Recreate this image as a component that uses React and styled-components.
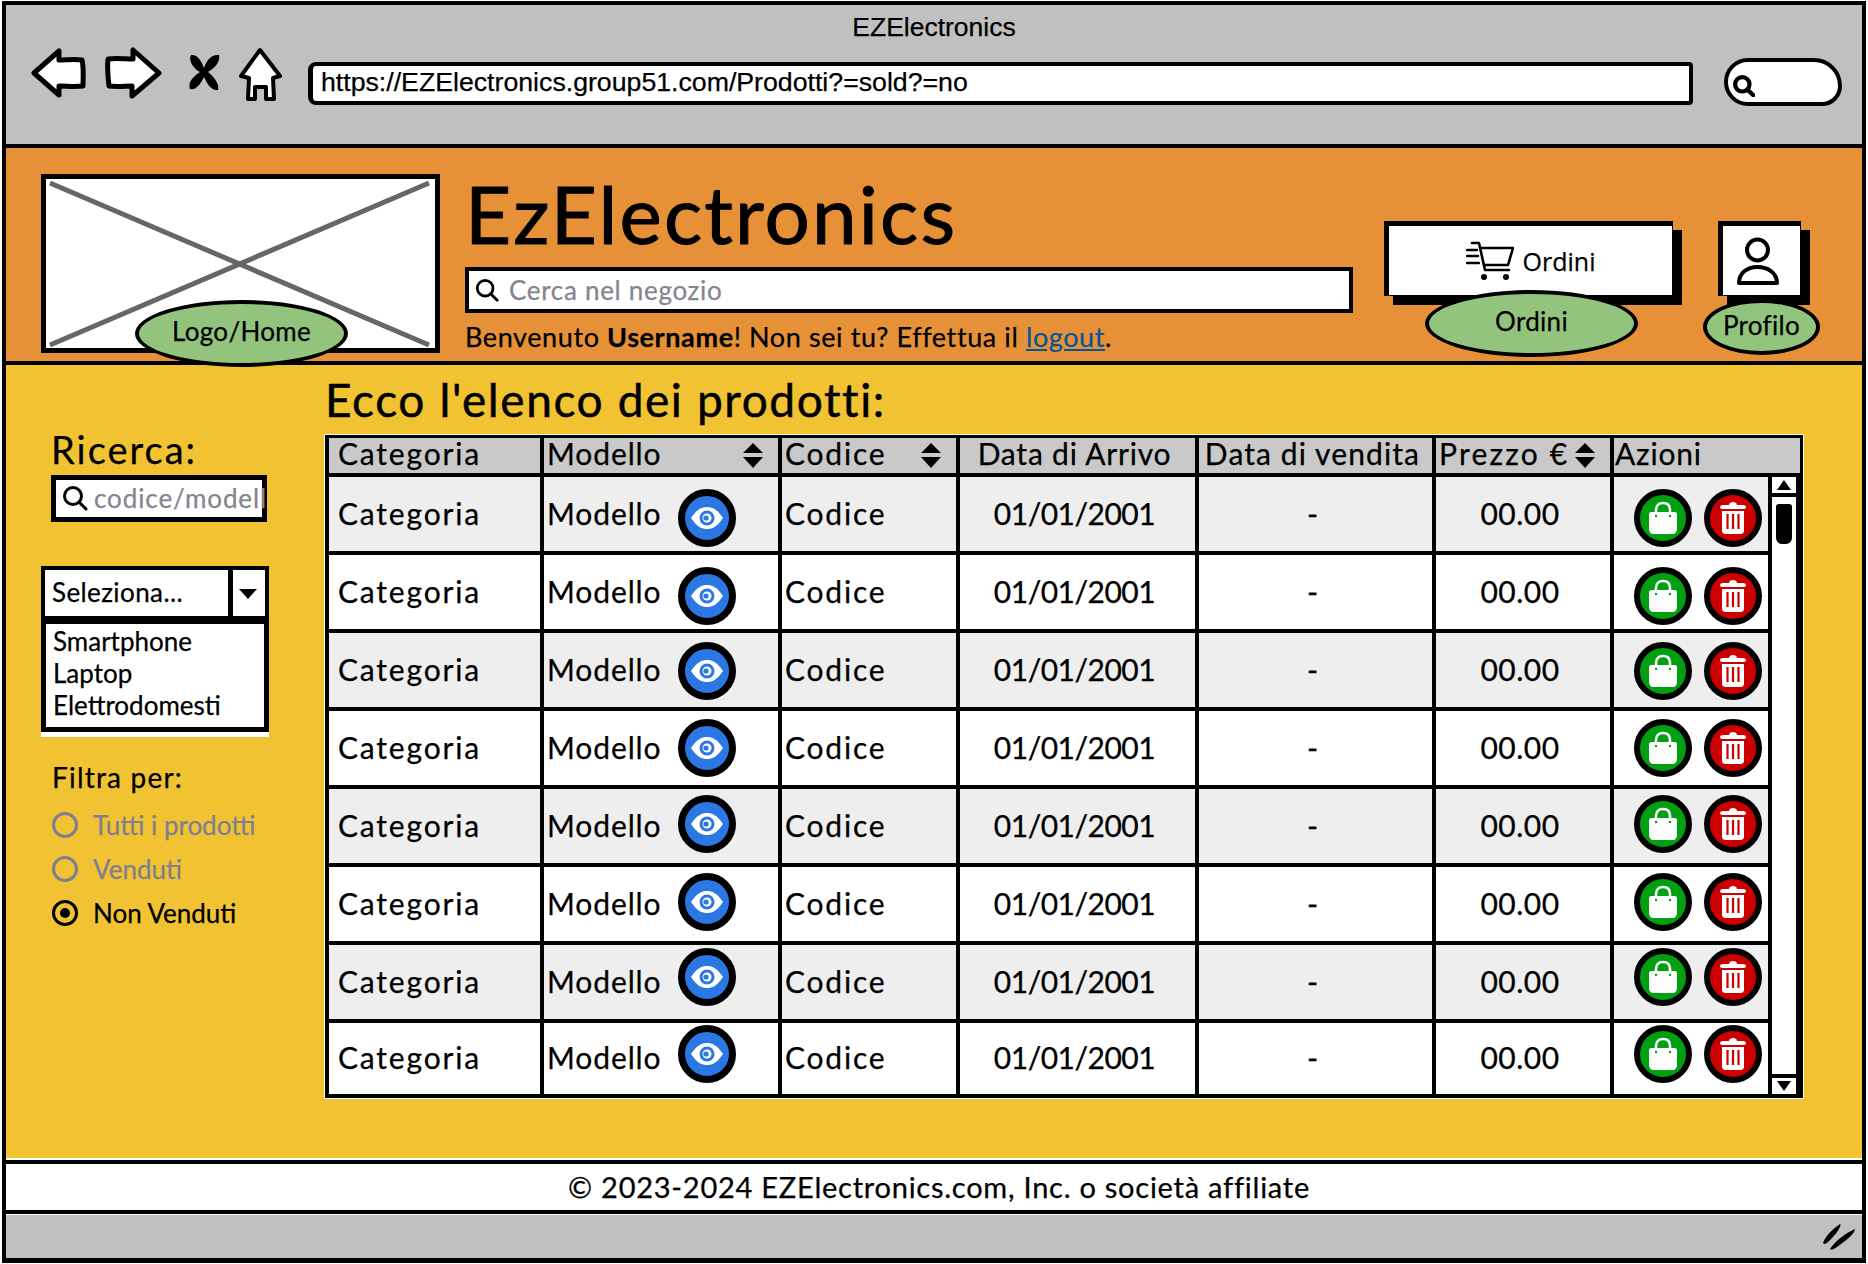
import styled, { createGlobalStyle } from 'styled-components';

const SKETCH = "Lato, 'Noto Sans', sans-serif";
const ARIAL = "'Liberation Sans', Arial, sans-serif";

const rowShifts = [4, 4, 1, 0, -2, -2, -5, -5];

const GlobalStyle = createGlobalStyle`
  html, body { margin: 0; padding: 0; background: #fff; }
  * { box-sizing: border-box; }
  body { font-family: ${SKETCH}; color: #000; -webkit-text-stroke: 0.25px currentColor; }
`;

const SortIcon = () => (
  <svg width="20" height="25" viewBox="0 0 20 25">
    <path d="M10 0 L20 10 H0 Z M0 14 H20 L10 25 Z" fill="#000" />
  </svg>
);

const MagIcon = ({ size = 26, stroke = 3 }) => (
  <svg width={size} height={size} viewBox="0 0 26 26" fill="none" stroke="#000" strokeWidth={stroke} strokeLinecap="round">
    <circle cx="11" cy="11" r="8.5" />
    <path d="M17 17 L24 24" />
  </svg>
);

const CartIcon = () => (
  <svg width="48" height="40" viewBox="0 0 48 40" fill="none" stroke="#000" strokeWidth="2.6" strokeLinecap="round" strokeLinejoin="round">
    <path d="M6 2 H13 L19 29 H43" />
    <path d="M15 7 H47 L42 24 H18" />
    <path d="M1 9 H11 M1 15 H12 M1 22 H13" strokeWidth="2.4" />
    <circle cx="18" cy="36" r="3" fill="#000" stroke="none" />
    <circle cx="40" cy="36" r="3" fill="#000" stroke="none" />
  </svg>
);

const UserIcon = () => (
  <svg width="42" height="48" viewBox="0 0 42 48" fill="none" stroke="#000" strokeWidth="4">
    <circle cx="20.5" cy="13" r="10.5" />
    <path d="M2 46 C2 36 10 30 20.5 30 C31 30 40 36 40 46 Z" strokeLinejoin="round" />
  </svg>
);

const EyeIcon = () => (
  <svg width="34" height="24" viewBox="0 0 34 24">
    <path d="M1 12 C7 3 12 1 17 1 C22 1 27 3 33 12 C27 21 22 23 17 23 C12 23 7 21 1 12 Z" fill="#fff" />
    <circle cx="17" cy="12" r="7.5" fill="#2b78e4" />
    <circle cx="17" cy="12" r="4.5" fill="#fff" />
    <circle cx="16" cy="12" r="2.6" fill="#2b78e4" />
  </svg>
);

const BagIcon = () => (
  <svg width="30" height="34" viewBox="0 0 30 34">
    <path d="M8 14 V9 C8 4 11 2 15 2 C19 2 22 4 22 9 V14" fill="none" stroke="#fff" strokeWidth="2.6" />
    <path d="M3 11 H27 C28 11 29 12 29 13 V28 C29 31 27 33 25 33 H5 C3 33 1 31 1 28 V13 C1 12 2 11 3 11 Z" fill="#fff" />
    <circle cx="8" cy="15" r="1.2" fill="#00a010" />
    <circle cx="22" cy="15" r="1.2" fill="#00a010" />
  </svg>
);

const TrashIcon = () => (
  <svg width="28" height="34" viewBox="0 0 28 34">
    <path d="M1 6 C1 5 2 4 4 4 H10 C10 2 12 1 14 1 C16 1 18 2 18 4 H24 C26 4 27 5 27 6 C27 7 26 8 25 8 H3 C2 8 1 7 1 6 Z" fill="#fff" />
    <path d="M3 10 H25 V30 C25 32 23 33 22 33 H6 C5 33 3 32 3 30 Z" fill="#fff" />
    <path d="M8.5 13 V28 M14 13 V28 M19.5 13 V28" stroke="#cc0000" strokeWidth="2.2" />
  </svg>
);

const BackArrow = () => (
  <svg width="56" height="50" viewBox="0 0 56 50" fill="#fff" stroke="#000" strokeWidth="5" strokeLinejoin="round">
    <path d="M3 25 L28 3 V12 C36 12 44 11 51 12 C53 20 52 30 52 38 C44 39 36 38 28 38 V47 Z" />
  </svg>
);

const ForwardArrow = () => (
  <svg width="57" height="52" viewBox="0 0 57 52" fill="#fff" stroke="#000" strokeWidth="5" strokeLinejoin="round">
    <path d="M54 26 L28 3 V12 C20 12 11 11 3 12 C2 20 3 30 4 39 C12 40 20 39 27 39 V49 Z" />
  </svg>
);

const StopCross = () => (
  <svg width="32" height="38" viewBox="0 0 32 38">
    <path d="M3 2 C10 1 14 9 16 15 C18 9 22 1 31 2 C33 10 24 17 20 19 C24 22 32 30 30 37 C22 38 18 28 16 24 C14 28 9 38 2 36 C-1 28 8 22 12 19 C6 16 0 8 3 2 Z" fill="#000" />
  </svg>
);

const HomeIcon = () => (
  <svg width="44" height="54" viewBox="0 0 44 54" fill="#fff" stroke="#000" strokeWidth="4" strokeLinejoin="round">
    <path d="M22 3 L42 29 L35 31 L36 52 H28 V40 H17 V52 H10 L11 31 L3 29 Z" />
  </svg>
);

const GripIcon = () => (
  <svg width="34" height="27" viewBox="0 0 34 27">
    <path d="M1 20 C4 12 12 5 18 1 C20 2 16 9 10 15 C7 18 3 23 1 20 Z M8 26 C14 17 24 10 33 6 C33 10 25 17 19 21 C15 24 10 28 8 26 Z" fill="#000" />
  </svg>
);

const App = () => (
  <Window>
    <GlobalStyle />
    <BrowserBar>
      <BrowserTitle>EZElectronics</BrowserTitle>
      <Toolbar>
        <NavButton $top={1}><BackArrow /></NavButton>
        <NavButton $top={0} $gap={18}><ForwardArrow /></NavButton>
        <NavButton $top={6} $gap={26}><StopCross /></NavButton>
        <NavButton $top={0} $gap={18}><HomeIcon /></NavButton>
        <UrlBar>https://EZElectronics.group51.com/Prodotti?=sold?=no</UrlBar>
        <SearchPill><MagIcon size={22} stroke={5} /></SearchPill>
      </Toolbar>
    </BrowserBar>

    <SiteHeader>
      <LogoBox>
        <svg width="389" height="169" viewBox="0 0 389 169">
          <path d="M4 4 L383 166 M383 4 L4 166" stroke="#666" strokeWidth="5" fill="none" />
        </svg>
        <Note $left={89} $top={121} $width={213} $height={67}>Logo/Home</Note>
      </LogoBox>
      <HeaderCenter>
        <SiteTitle>EzElectronics</SiteTitle>
        <HeaderSearch>
          <MagIcon size={24} />
          <Placeholder>Cerca nel negozio</Placeholder>
        </HeaderSearch>
        <Welcome>
          Benvenuto <b>Username</b>! Non sei tu? Effettua il <WelcomeLink>logout</WelcomeLink>.
        </Welcome>
      </HeaderCenter>
      <ShadowButton $width={298} $gap={31}>
        <CartIcon />
        <ButtonLabel>Ordini</ButtonLabel>
        <Note $left={36} $top={64} $width={213} $height={67}>Ordini</Note>
      </ShadowButton>
      <ShadowButton $width={92} $gap={45} $iconShift={8}>
        <UserIcon />
        <Note $left={-20} $top={73} $width={117} $height={56}>Profilo</Note>
      </ShadowButton>
    </SiteHeader>

    <Main>
      <Sidebar>
        <SearchLabel>Ricerca:</SearchLabel>
        <SideSearch>
          <MagIcon size={26} />
          <SidePlaceholder>codice/modell</SidePlaceholder>
        </SideSearch>
        <SelectWrap>
          <SelectBox>
            <SelectValue>Seleziona...</SelectValue>
            <SelectCaret />
          </SelectBox>
          <SelectList>
            <div>Smartphone</div>
            <div>Laptop</div>
            <div>Elettrodomesti</div>
          </SelectList>
        </SelectWrap>
        <FilterLabel>Filtra per:</FilterLabel>
        <RadioRow><Radio /><RadioText>Tutti i prodotti</RadioText></RadioRow>
        <RadioRow><Radio /><RadioText>Venduti</RadioText></RadioRow>
        <RadioRow><Radio $active /><RadioText $active>Non Venduti</RadioText></RadioRow>
      </Sidebar>

      <Content>
        <ListTitle>Ecco l'elenco dei prodotti:</ListTitle>
        <Table>
          <HeadRow>
            <HeadCell $pad={9} $track={1.8}>Categoria</HeadCell>
            <HeadCell $pad={3} $track={0.9}>Modello<SortSlot><SortIcon /></SortSlot></HeadCell>
            <HeadCell $pad={3} $track={1.8}>Codice<SortSlot><SortIcon /></SortSlot></HeadCell>
            <HeadCell $center $track={0.8}>Data di Arrivo</HeadCell>
            <HeadCell $center $track={1.1}>Data di vendita</HeadCell>
            <HeadCell $pad={3} $track={2.2}>Prezzo €<SortSlot><SortIcon /></SortSlot></HeadCell>
            <HeadCell $pad={1} $track={0.8} $last>Azioni</HeadCell>
          </HeadRow>
          <TableBody>
            <Rows>
              {rowShifts.map((shift, i) => (
                <Row key={i} $alt={i % 2 === 0}>
                  <Cell $pad={9} $track={1.8}>Categoria</Cell>
                  <Cell $pad={3} $track={0.9}>
                    Modello
                    <EyeButton $shift={shift}><EyeIcon /></EyeButton>
                  </Cell>
                  <Cell $pad={3} $track={1.8}>Codice</Cell>
                  <Cell $center $track={-0.5}>01/01/2001</Cell>
                  <Cell $center>-</Cell>
                  <Cell $center $track={0.5}>00.00</Cell>
                  <ActionCell>
                    <RoundButton $color="#00a010" $shift={shift}><BagIcon /></RoundButton>
                    <RoundButton $color="#cc0000" $shift={shift}><TrashIcon /></RoundButton>
                  </ActionCell>
                </Row>
              ))}
            </Rows>
            <Scrollbar>
              <ScrollArrow />
              <ScrollTrack><ScrollThumb /></ScrollTrack>
              <ScrollArrow $down />
            </Scrollbar>
          </TableBody>
        </Table>
      </Content>
    </Main>

    <Footer>© 2023-2024 EZElectronics.com, Inc. o società affiliate</Footer>
    <StatusBar><GripIcon /></StatusBar>
  </Window>
);

const Window = styled.div`
  width: 1864px;
  height: 1262px;
  margin: 1px 2px;
  border: 4px solid #000;
  border-bottom-width: 5px;
  display: flex;
  flex-direction: column;
  overflow: hidden;
`;

const BrowserBar = styled.div`
  height: 143px;
  flex: none;
  background: #c0c0c0;
  border-bottom: 4px solid #000;
`;

const BrowserTitle = styled.div`
  height: 42px;
  text-align: center;
  font: 26.5px/44px ${ARIAL};
`;

const Toolbar = styled.div`
  display: flex;
  align-items: flex-start;
  padding-left: 25px;
`;

const NavButton = styled.div`
  flex: none;
  display: flex;
  margin-top: ${(p) => p.$top}px;
  margin-left: ${(p) => p.$gap || 0}px;
`;

const UrlBar = styled.div`
  width: 1385px;
  height: 43px;
  margin: 15px 0 0 26px;
  flex: none;
  background: #fff;
  border: 4px solid #000;
  border-left-width: 5px;
  border-radius: 8px 4px 4px 8px;
  padding-left: 8px;
  font: 26.7px/33px ${ARIAL};
`;

const SearchPill = styled.div`
  width: 118px;
  height: 48px;
  margin: 11px 0 0 31px;
  flex: none;
  background: #fff;
  border: 4px solid #000;
  border-radius: 24px 28px 20px 24px;
  padding: 13px 0 0 5px;
  display: flex;
`;

const SiteHeader = styled.header`
  height: 217px;
  flex: none;
  display: flex;
  align-items: flex-start;
  background: #e69138;
  border-bottom: 4px solid #000;
  padding: 26px 0 0 35px;
`;

const LogoBox = styled.div`
  position: relative;
  flex: none;
  width: 399px;
  height: 179px;
  background: #fff;
  border: 5px solid #000;
`;

const Note = styled.div`
  position: absolute;
  left: ${(p) => p.$left}px;
  top: ${(p) => p.$top}px;
  width: ${(p) => p.$width}px;
  height: ${(p) => p.$height}px;
  padding-bottom: 5px;
  background: #93c47d;
  border: 4px solid #000;
  border-radius: 50%;
  display: flex;
  align-items: center;
  justify-content: center;
  font-size: 26px;
  letter-spacing: 0.3px;
`;

const HeaderCenter = styled.div`
  flex: none;
  width: 888px;
  margin-left: 25px;
`;

const SiteTitle = styled.h1`
  margin: 0;
  height: 93px;
  font-size: 80px;
  line-height: 79px;
  font-weight: 400;
  letter-spacing: 2.1px;
  -webkit-text-stroke: 1px #000;
`;

const HeaderSearch = styled.div`
  height: 46px;
  background: #fff;
  border: 4px solid #000;
  display: flex;
  align-items: center;
  gap: 10px;
  padding: 0 0 1px 6px;

  svg { flex: none; }
`;

const Placeholder = styled.span`
  color: #85858f;
  font-size: 26px;
  letter-spacing: 0.7px;
`;

const Welcome = styled.div`
  margin-top: 6px;
  font-size: 27px;
  line-height: 36px;
  letter-spacing: 0.6px;
`;

const WelcomeLink = styled.span`
  color: #0b5394;
  text-decoration: underline;
`;

const ShadowButton = styled.div`
  position: relative;
  flex: none;
  width: ${(p) => p.$width - 9}px;
  height: 75px;
  margin: 47px 0 0 ${(p) => p.$gap}px;
  padding-right: ${(p) => p.$iconShift || 0}px;
  background: #fff;
  border: 5px solid #000;
  border-right-width: 1px;
  border-bottom-width: 1px;
  box-shadow: 9px 9px 0 #000;
  display: flex;
  align-items: center;
  justify-content: center;
  gap: 9px;
`;

const ButtonLabel = styled.span`
  font: 25px 'Open Sans', sans-serif;
`;

const Main = styled.main`
  flex: 1;
  display: flex;
  background: #f1c232;
  min-height: 0;
`;

const Sidebar = styled.aside`
  flex: none;
  width: 319px;
  padding: 60px 0 0 35px;
`;

const SearchLabel = styled.div`
  margin-left: 10px;
  font-size: 38px;
  line-height: 48px;
  letter-spacing: 2px;
`;

const SideSearch = styled.div`
  width: 216px;
  height: 47px;
  margin: 2px 0 0 10px;
  background: #fff;
  border: 5px solid #000;
  display: flex;
  align-items: center;
  gap: 6px;
  padding: 0 0 2px 6px;
  white-space: nowrap;

  svg { flex: none; }
`;

const SidePlaceholder = styled.span`
  color: #85858f;
  font-size: 26px;
  letter-spacing: 0.9px;
`;

const SelectWrap = styled.div`
  width: 228px;
  margin-top: 44px;
  background: #fff;
  padding-bottom: 5px;
`;

const SelectBox = styled.div`
  height: 50px;
  border: 4px solid #000;
  border-bottom: none;
  display: flex;
  font-size: 26px;
  letter-spacing: 0.4px;
`;

const SelectValue = styled.div`
  flex: 1;
  line-height: 44px;
  padding-left: 7px;
  border-right: 5px solid #000;
`;

const SelectCaret = styled.div`
  flex: none;
  width: 32px;
  position: relative;

  &::after {
    content: '';
    position: absolute;
    left: 6px;
    top: 19px;
    border: 9px solid transparent;
    border-top: 10px solid #000;
    border-bottom: none;
  }
`;

const SelectList = styled.div`
  height: 116px;
  border: 5px solid #000;
  border-top-width: 8px;
  padding: 1px 0 0 7px;
  font-size: 26px;
  line-height: 32px;
`;

const FilterLabel = styled.div`
  margin: 22px 0 0 11px;
  font-size: 28px;
  line-height: 36px;
  letter-spacing: 1.2px;
`;

const RadioRow = styled.div`
  display: flex;
  align-items: center;
  height: 44px;
  margin-left: 11px;
  ${FilterLabel} + & { margin-top: 8px; }
`;

const Radio = styled.span`
  flex: none;
  width: 26px;
  height: 26px;
  border-radius: 50%;
  border: 3px solid ${(p) => (p.$active ? '#000' : '#7f7f8f')};
  display: flex;
  align-items: center;
  justify-content: center;

  &::after {
    content: '';
    width: 10px;
    height: 10px;
    border-radius: 50%;
    background: ${(p) => (p.$active ? '#000' : 'transparent')};
  }
`;

const RadioText = styled.span`
  margin-left: 15px;
  font-size: 26px;
  color: ${(p) => (p.$active ? '#000' : '#7f7f8f')};
`;

const Content = styled.section`
  flex: none;
  width: 1478px;
  padding-top: 7px;
`;

const ListTitle = styled.h2`
  margin: 0 0 7px 0;
  font-size: 46px;
  line-height: 56px;
  font-weight: 400;
  letter-spacing: 1.6px;
  -webkit-text-stroke: 0.5px #000;
`;

const COLUMNS = '215px 238px 178px 239px 237px 178px 1fr';

const Table = styled.div`
  width: 1478px;
  border: 3px solid #000;
  border-left-width: 4px;
  border-bottom: none;
  box-shadow: 0 0 0 1px #fff;
  font-size: 30px;
`;

const HeadRow = styled.div`
  display: grid;
  grid-template-columns: ${COLUMNS};
  height: 39px;
  background: #c9c9c9;
  border-bottom: 4px solid #000;
  line-height: 30px;
`;

const HeadCell = styled.div`
  display: flex;
  align-items: center;
  justify-content: ${(p) => (p.$center ? 'center' : 'flex-start')};
  padding: 0 ${(p) => (p.$center ? 6 : 0)}px 5px ${(p) => p.$pad || 0}px;
  border-right: ${(p) => (p.$last ? 'none' : '4px solid #000')};
  letter-spacing: ${(p) => p.$track || 0}px;
  white-space: nowrap;
`;

const SortSlot = styled.span`
  display: flex;
  margin-left: auto;
  margin-right: 15px;
  margin-top: 5px;
`;

const TableBody = styled.div`
  display: flex;
`;

const Rows = styled.div`
  flex: 1;
  min-width: 0;
`;

const Row = styled.div`
  display: grid;
  grid-template-columns: 215px 238px 178px 239px 237px 178px 154px;
  height: 78px;
  background: ${(p) => (p.$alt ? '#eeeeee' : '#fff')};
  border-bottom: 4px solid #000;

  &:last-child {
    height: 75px;
  }
`;

const Cell = styled.div`
  display: flex;
  align-items: center;
  justify-content: ${(p) => (p.$center ? 'center' : 'flex-start')};
  padding: 0 ${(p) => (p.$center ? 6 : 0)}px 3px ${(p) => p.$pad || 0}px;
  border-right: 4px solid #000;
  letter-spacing: ${(p) => p.$track || 0}px;
`;

const EyeButton = styled.span`
  flex: none;
  width: 58px;
  height: 58px;
  margin-left: auto;
  margin-right: 42px;
  margin-top: ${(p) => p.$shift * 2 + 3}px;
  border-radius: 50%;
  border: 7px solid #000;
  background: #2b78e4;
  display: flex;
  align-items: center;
  justify-content: center;
`;

const ActionCell = styled.div`
  display: flex;
  align-items: center;
  gap: 12px;
  padding-left: 20px;
`;

const RoundButton = styled.span`
  flex: none;
  width: 58px;
  height: 58px;
  margin-top: ${(p) => p.$shift * 2}px;
  border-radius: 50%;
  border: 6px solid #000;
  background: ${(p) => p.$color};
  display: flex;
  align-items: center;
  justify-content: center;
`;

const Scrollbar = styled.div`
  flex: none;
  width: 32px;
  background: #fff;
  border-left: 4px solid #000;
  border-right: 4px solid #000;
  border-bottom: 4px solid #000;
  display: flex;
  flex-direction: column;
`;

const ScrollArrow = styled.div`
  flex: none;
  height: 20px;
  display: flex;
  align-items: center;
  justify-content: center;
  border-top: ${(p) => (p.$down ? '4px solid #000' : 'none')};
  border-bottom: ${(p) => (p.$down ? 'none' : '4px solid #000')};

  &::after {
    content: '';
    border-left: 7px solid transparent;
    border-right: 7px solid transparent;
    ${(p) => (p.$down ? 'border-top: 10px solid #000;' : 'border-bottom: 10px solid #000;')}
  }
`;

const ScrollTrack = styled.div`
  flex: 1;
  padding: 7px 4px 0;
`;

const ScrollThumb = styled.div`
  height: 40px;
  background: #000;
  border-radius: 3px 3px 6px 6px;
`;

const Footer = styled.footer`
  flex: none;
  height: 54px;
  margin-top: 2px;
  padding-left: 10px;
  background: #fff;
  border-top: 4px solid #000;
  border-bottom: 4px solid #000;
  text-align: center;
  font-size: 29px;
  line-height: 45px;
  letter-spacing: 0.75px;
`;

const StatusBar = styled.div`
  flex: 0 0 43px;
  margin-top: 1px;
  background: #c0c0c0;
  display: flex;
  align-items: center;
  justify-content: flex-end;
  padding-right: 6px;
`;

export default App;
